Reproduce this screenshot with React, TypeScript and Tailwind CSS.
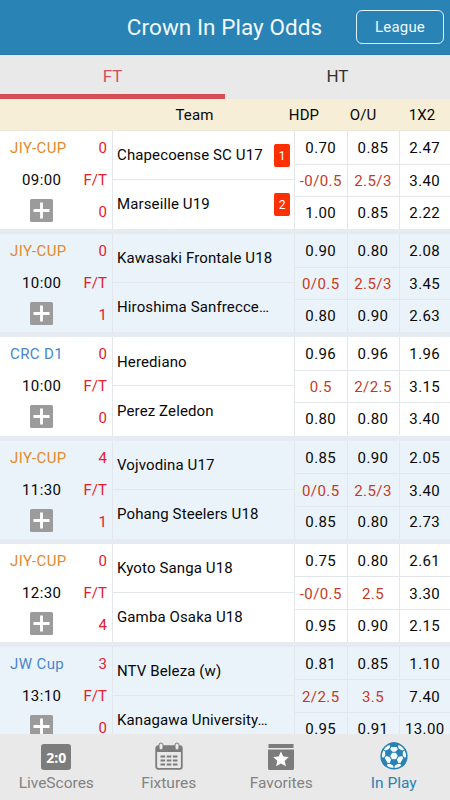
import React from "react";

type Match = {
  league: string;
  blue?: boolean;
  time: string;
  home: string;
  away: string;
  hs: string;
  as: string;
  cards?: [string, string];
  odds: string[][];
};

const matches: Match[] = [
  { league: "JIY-CUP", time: "09:00", home: "Chapecoense SC U17", away: "Marseille U19", hs: "0", as: "0", cards: ["1", "2"], odds: [["0.70", "0.85", "2.47"], ["-0/0.5", "2.5/3", "3.40"], ["1.00", "0.85", "2.22"]] },
  { league: "JIY-CUP", time: "10:00", home: "Kawasaki Frontale U18", away: "Hiroshima Sanfrecce…", hs: "0", as: "1", odds: [["0.90", "0.80", "2.08"], ["0/0.5", "2.5/3", "3.45"], ["0.80", "0.90", "2.63"]] },
  { league: "CRC D1", blue: true, time: "10:00", home: "Herediano", away: "Perez Zeledon", hs: "0", as: "0", odds: [["0.96", "0.96", "1.96"], ["0.5", "2/2.5", "3.15"], ["0.80", "0.80", "3.40"]] },
  { league: "JIY-CUP", time: "11:30", home: "Vojvodina U17", away: "Pohang Steelers U18", hs: "4", as: "1", odds: [["0.85", "0.90", "2.05"], ["0/0.5", "2.5/3", "3.40"], ["0.85", "0.80", "2.73"]] },
  { league: "JIY-CUP", time: "12:30", home: "Kyoto Sanga U18", away: "Gamba Osaka U18", hs: "0", as: "4", odds: [["0.75", "0.80", "2.61"], ["-0/0.5", "2.5", "3.30"], ["0.95", "0.90", "2.15"]] },
  { league: "JW Cup", blue: true, time: "13:10", home: "NTV Beleza (w)", away: "Kanagawa University…", hs: "3", as: "0", odds: [["0.81", "0.85", "1.10"], ["2/2.5", "3.5", "7.40"], ["0.95", "0.91", "13.00"]] },
];

function Team({ name, card, top }: { name: string; card?: string; top?: boolean }) {
  return (
    <div className={`flex h-[49px] items-center justify-between pl-[4px] pr-[4px] tracking-[0.12px] ${top ? "border-b border-[#e3e7eb] pt-px" : ""}`}>
      <span className="whitespace-nowrap">{name}</span>
      {card && (
        <span className="flex h-[23px] w-[16px] items-center justify-center rounded-[2px] bg-[#fc3003] text-[12px] tracking-normal text-white">{card}</span>
      )}
    </div>
  );
}

function Row({ m, alt }: { m: Match; alt: boolean }) {
  return (
    <div className={`flex h-[103.2px] shrink-0 border-b-[5px] border-[#e6ebf1] ${alt ? "bg-[#ebf3fa]" : "bg-white"}`}>
      <div className="flex w-[82px] flex-col">
        <div className={`h-[33px] whitespace-nowrap pl-[10px] leading-[34px] ${m.blue ? "text-[#4a86cc]" : "text-[#e38a2c]"}`}>{m.league}</div>
        <div className="h-[32px] pl-[22px] leading-[32px]">{m.time}</div>
        <div className="pl-[30px] pt-[3px]">
          <svg width="23" height="23" viewBox="0 0 23 23">
            <rect width="23" height="23" rx="1.5" fill="#9b9b9b" />
            <path d="M11.5 3.5v16M3.5 11.5h16" stroke="#fff" strokeWidth="2.8" />
          </svg>
        </div>
      </div>
      <div className="flex w-[31px] flex-col border-r border-[#e3e7eb] pr-[5px] text-right tracking-normal text-[#e3202f]">
        <div className="h-[33px] leading-[34px]">{m.hs}</div>
        <div className="h-[32px] leading-[32px]">F/T</div>
        <div className="h-[33px] leading-[33px]">{m.as}</div>
      </div>
      <div className="w-[182px] border-r border-[#e3e7eb]">
        <Team name={m.home} card={m.cards?.[0]} top />
        <Team name={m.away} card={m.cards?.[1]} />
      </div>
      <div className="grid flex-1 grid-cols-[52.5px_52px_1fr] grid-rows-[33.5px_32.5px_32px]">
        {m.odds.map((line, r) =>
          line.map((v, c) => (
            <div key={`${r}-${c}`} className={`flex items-center justify-center border-[#e3e7eb] ${r < 2 ? "border-b pt-[2px]" : ""} ${c < 2 ? "border-r" : ""} ${r === 1 && c < 2 ? "text-[#c53b22]" : ""}`}>
              {v}
            </div>
          ))
        )}
      </div>
    </div>
  );
}

function Ball() {
  return (
    <svg width="28" height="28" viewBox="-14 -14 28 28">
      <circle r="12.8" fill="#f6fbfe" stroke="#2983b5" strokeWidth="1.6" />
      {[0, 120, 240].map((a) => (
        <g key={a} transform={`rotate(${a})`} fill="#2983b5" stroke="#2983b5" strokeWidth="1.1" strokeLinejoin="round">
          <path d="M-2.3 3.8H2.3L3.6 7.3L0 9.6L-3.6 7.300Z" />
          <path d="M-3.2 -9.600H3.2L4.800 -12.200Q0 -14.200 -4.800 -12.200Z" />
          <path d="M0 9.500V13M-2.150 -3.800H2.150M3.200 -9.600L4.600 -6.500M-3.200 -9.600L-4.600 -6.500" fill="none" />
          <path d="M2.150 -3.800L4.600 -6.500M-2.150 -3.800L-4.600 -6.500" fill="none" />
        </g>
      ))}
    </svg>
  );
}

export default function App() {
  return (
    <div className="flex h-[800px] w-[450px] flex-col overflow-hidden bg-white font-['Roboto',sans-serif] text-[15px] tracking-[0.4px] text-[#080808]">
      <header className="grid h-[55px] shrink-0 grid-cols-[112px_225px_1fr] items-center border-b border-[#2a7bab] bg-[#2983b5] text-[#f0f9ff]">
        <div />
        <h1 className="whitespace-nowrap pt-[2px] text-center text-[22.5px] tracking-[0.050px]">Crown In Play Odds</h1>
        <button className="ml-[19px] h-[34px] w-[88px] rounded-[6px] border border-[#e4f2fa] pt-px text-[15px] tracking-[0.2px]">League</button>
      </header>
      <nav className="flex h-[44px] shrink-0 bg-[#e9e9e9] text-[17px] tracking-normal">
        <div className="flex-1 border-b-[5px] border-[#d54e53] text-center leading-[43px] text-[#d54e5b]">FT</div>
        <div className="flex-1 text-center leading-[43px] text-[#333]">HT</div>
      </nav>
      <div className="grid h-[32px] shrink-0 grid-cols-[113px_163px_56px_62px_56px] items-center border-b border-[#ece7d8] bg-[#f6eed6] pt-px text-center tracking-[0.1px]">
        <span />
        <span>Team</span>
        <span>HDP</span>
        <span>O/U</span>
        <span>1X2</span>
      </div>
      <main className="flex min-h-0 flex-1 flex-col overflow-hidden">
        {matches.map((m, i) => (
          <Row key={i} m={m} alt={i % 2 === 1} />
        ))}
      </main>
      <footer className="grid h-[66px] shrink-0 grid-cols-4 bg-[#e9e9e9] text-[15.5px] tracking-normal text-[#828282]">
        <div className="flex flex-col items-center">
          <div className="mt-[10px] flex h-[26px] w-[30px] items-center justify-center rounded-[3px] bg-[#7c7c7c] font-['Open_Sans',sans-serif] text-[14px] font-bold tracking-normal text-white">2:0</div>
          <span className="mt-[2px]">LiveScores</span>
        </div>
        <div className="flex flex-col items-center">
          <svg className="mt-[8px]" width="28" height="28" viewBox="0 0 28 28">
            <rect x="1.2" y="4.2" width="25.6" height="22.6" rx="2" fill="none" stroke="#7c7c7c" strokeWidth="1.8" />
            <path d="M1 4h26v6H1z" fill="#7c7c7c" />
            <rect x="4" y="1" width="4" height="7" rx="2" fill="#e9e9e9" stroke="#7c7c7c" />
            <rect x="20" y="1" width="4" height="7" rx="2" fill="#e9e9e9" stroke="#7c7c7c" />
            <path d="M5.5 14.5h17M5.5 18.5h17M5.5 22.5h17" stroke="#7c7c7c" strokeWidth="1.8" strokeDasharray="4.6 1.6" />
          </svg>
          <span className="mt-[2px]">Fixtures</span>
        </div>
        <div className="flex flex-col items-center">
          <svg className="mt-[8px]" width="28" height="28" viewBox="0 0 28 28">
            <path d="M1.5 2h25v4h-25zM1 7.5h26v19a1.5 1.5 0 0 1-1.5 1.5h-23A1.5 1.5 0 0 1 1 26.5z" fill="#7c7c7c" />
            <path d="M14 9.5l2.3 5 5.500.6-4.100 3.700 1.200 5.400-4.900-2.800-4.900 2.800 1.200-5.400-4.100-3.700 5.500-.6z" fill="#fff" />
          </svg>
          <span className="mt-[2px]">Favorites</span>
        </div>
        <div className="flex flex-col items-center text-[#2983b5]">
          <div className="mt-[8px] h-[28px]"><Ball /></div>
          <span className="mt-[2px]">In Play</span>
        </div>
      </footer>
    </div>
  );
}
